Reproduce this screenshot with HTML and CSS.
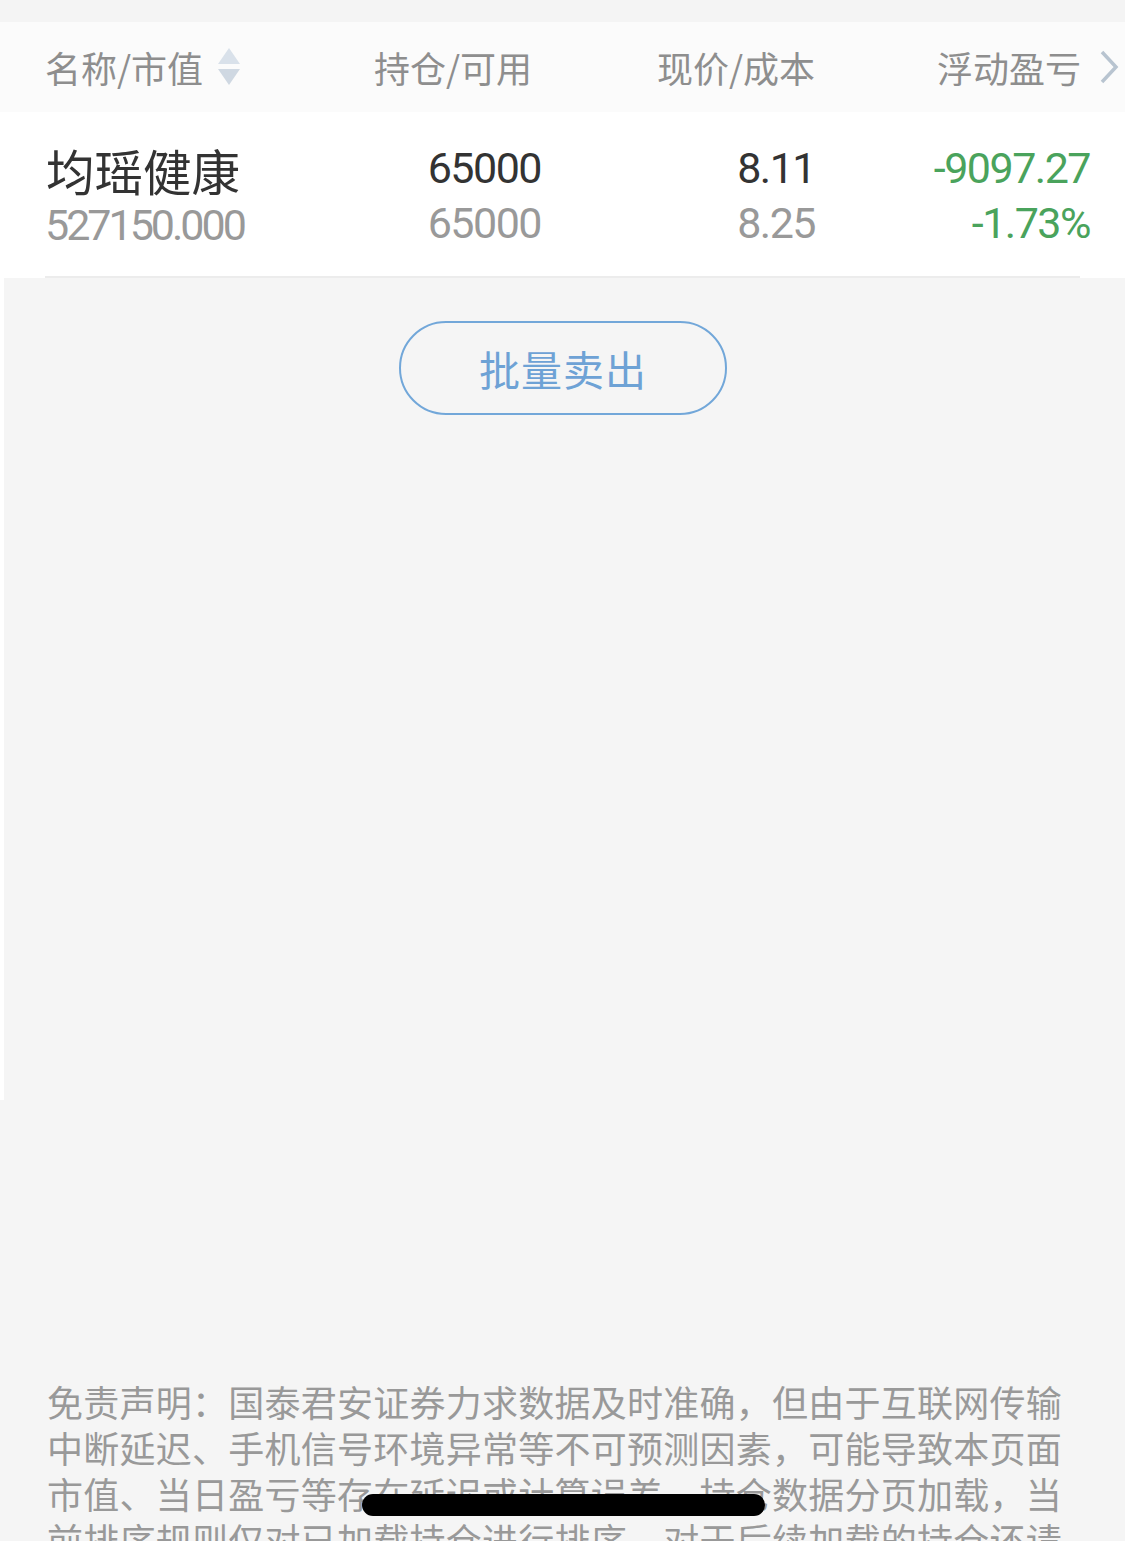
FILE: index.html
```html
<!DOCTYPE html>
<html>
	<head>
		<meta charset="UTF-8">
		<meta name="viewport" content="width=device-width,initial-scale=1.0">
		<title>持仓</title>
		<link rel="stylesheet" href="styles.css">
	</head>
	<body>
		<div class="topbar"></div>
		<!-- 表头 -->
		<div class="head">
			<div class="col name">名称/市值
				<svg class="sort" width="22" height="38" viewBox="0 0 22 38">
					<polygon points="11,0 22,16 0,16" fill="#d9e1ea"/>
					<polygon points="0,21 22,21 11,37" fill="#cfd8e2"/>
				</svg>
			</div>
			<div class="col">持仓/可用</div>
			<div class="col">现价/成本</div>
			<div class="col last">浮动盈亏
				<svg class="more" width="20" height="34" viewBox="0 0 20 34">
					<polyline points="3,2 17,17 3,32" fill="none" stroke="#b8c4d0" stroke-width="3.5"/>
				</svg>
			</div>
		</div>
		<div class="list">
			<div class="row">
				<div class="cell name">
					<p class="stock">均瑶健康</p>
					<p class="num sub">527150.000</p>
				</div>
				<div class="cell">
					<p class="num">65000</p>
					<p class="num sub">65000</p>
				</div>
				<div class="cell">
					<p class="num">8.11</p>
					<p class="num sub">8.25</p>
				</div>
				<div class="cell">
					<p class="num down">-9097.27</p>
					<p class="num down">-1.73%</p>
				</div>
			</div>
			<div class="blank">
				<a href="#" class="btn">批量卖出</a>
			</div>
		</div>
		<div class="notice">
			免责声明：国泰君安证券力求数据及时准确，但由于互联网传输中断延迟、手机信号环境异常等不可预测因素，可能导致本页面市值、当日盈亏等存在延迟或计算误差，持仓数据分页加载，当前排序规则仅对已加载持仓进行排序，对于后续加载的持仓还请您重新排序。
		</div>
		<div class="home-bar"></div>
	</body>
</html>
```

FILE: styles.css
```css
*{
	padding: 0;
	margin: 0;
}
html,body{
	height: 100%;
	overflow: hidden;
}
body{
	position: relative;
	background: #f5f5f5;
	font-family: "Noto Sans CJK SC", "Noto Sans", sans-serif;
}
.topbar{
	height: 22px;
	background: #f4f4f4;
}
.head{
	display: grid;
	grid-template-columns: 290px 197px 283px 1fr;
	align-items: center;
	height: 90px;
	padding-left: 45px;
	background: #fbfbfb;
	font-size: 36px;
	color: #8e8e8e;
}
.head .col{
	text-align: right;
	line-height: 40px;
}
.head .name{
	display: flex;
	align-items: center;
	text-align: left;
}
.head .sort{
	margin-left: 15px;
}
.head .last{
	display: flex;
	align-items: center;
	justify-content: flex-start;
	padding-left: 122px;
}
.head .more{
	margin-left: 18px;
}
.list{
	background: #fff;
	padding-left: 4px;
}
.row{
	display: grid;
	grid-template-columns: 286px 210px 274px 275px;
	margin-left: 41px;
	margin-right: 45px;
	padding-top: 29px;
	height: 135px;
	border-bottom: 2px solid #ececec;
	background: #fff;
}
.cell{
	text-align: right;
	line-height: 55px;
}
.cell.name{
	text-align: left;
}
.stock{
	font-size: 48.5px;
	color: #333;
	line-height: 58px;
	margin-left: 1px;
}
.num{
	font-family: Roboto, "Liberation Sans", sans-serif;
	font-size: 43px;
	letter-spacing: -1.5px;
	color: #333;
}
.num.sub{
	color: #999;
}
.cell.name .num{
	line-height: 52px;
	letter-spacing: -3px;
}
.num.down{
	color: #4aa35c;
}
.blank{
	height: 822px;
	background: #f5f5f5;
	padding-top: 43px;
	box-sizing: border-box;
	text-align: center;
}
.btn{
	display: inline-block;
	width: 324px;
	height: 90px;
	line-height: 90px;
	margin-right: 3px;
	border: 2px solid #72a7d9;
	border-radius: 47px;
	font-size: 41px;
	letter-spacing: 1px;
	color: #6ea2d5;
	text-decoration: none;
}
.notice{
	padding: 278px 40px 0 47px;
	font-size: 36px;
	letter-spacing: 0.25px;
	line-height: 46px;
	color: #999;
}
.home-bar{
	position: absolute;
	left: 362px;
	top: 1494px;
	width: 403px;
	height: 22px;
	border-radius: 11px;
	background: #000;
}
```
